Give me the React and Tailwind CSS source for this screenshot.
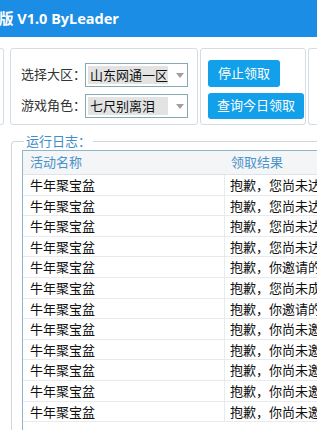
export default function App() {
  const rows = [
    "抱歉，您尚未达到领取条件",
    "抱歉，您尚未达到领取条件",
    "抱歉，您尚未达到领取条件",
    "抱歉，您尚未达到领取条件",
    "抱歉，你邀请的好友未达标",
    "抱歉，您尚未成功邀请好友",
    "抱歉，你邀请的好友未达标",
    "抱歉，你尚未邀请好友",
    "抱歉，你尚未邀请好友",
    "抱歉，你尚未邀请好友",
    "抱歉，你尚未邀请好友",
    "抱歉，你尚未邀请好友",
  ];

  return (
    <div
      className="w-[317px] h-[430px] overflow-hidden bg-white relative"
      style={{ fontFamily: '"Noto Sans", "Noto Sans CJK SC", sans-serif' }}
    >
      {/* title bar */}
      <div className="h-[37px] bg-[#1b8de4] flex items-center text-white font-bold text-[14.5px] whitespace-nowrap">
        <span className="-ml-[1px]">版 V1.0 ByLeader</span>
      </div>

      {/* top panels */}
      <div className="flex mt-[11px] h-[77px]">
        <div className="w-[4px] shrink-0 border border-l-0 border-[#d5dde2] rounded-r-[3px]" />
        <div className="ml-[6px] w-[188px] shrink-0 border border-[#d5dde2] rounded-[3px] pl-[10px] pt-[14px] flex flex-col gap-[7px]">
          <div className="flex items-center whitespace-nowrap">
            <span className="w-[64px] shrink-0 text-[13px] text-[#333]">选择大区：</span>
            <div className="w-[103px] h-[24px] shrink-0 border border-[#86a9b6] flex items-center pl-[2px]">
              <div className="w-[80px] h-[18px] bg-[#e3e3e3] text-[13px] text-[#111] leading-[18px] pl-[2px]">山东网通一区</div>
              <svg className="ml-[8px]" width="8" height="5" viewBox="0 0 8 5">
                <path d="M0 0 L8 0 L4 5 Z" fill="#a0a0a0" />
              </svg>
            </div>
          </div>
          <div className="flex items-center whitespace-nowrap">
            <span className="w-[64px] shrink-0 text-[13px] text-[#333]">游戏角色：</span>
            <div className="w-[103px] h-[24px] shrink-0 border border-[#86a9b6] flex items-center pl-[2px]">
              <div className="w-[80px] h-[18px] bg-[#e3e3e3] text-[13px] text-[#111] leading-[18px] pl-[2px]">七尺别离泪</div>
              <svg className="ml-[8px]" width="8" height="5" viewBox="0 0 8 5">
                <path d="M0 0 L8 0 L4 5 Z" fill="#a0a0a0" />
              </svg>
            </div>
          </div>
        </div>
        <div className="ml-[2px] w-[106px] shrink-0 border border-[#d5dde2] rounded-[3px] pl-[7px] pt-[11px] flex flex-col gap-[6px] items-start whitespace-nowrap">
          <button className="h-[27px] w-[72px] bg-[#12a0ea] text-white text-[13px] rounded-[3px]">停止领取</button>
          <button className="h-[26px] w-[96px] bg-[#12a0ea] text-white text-[13px] rounded-[3px]">查询今日领取</button>
        </div>
        <div className="ml-[2px] w-[20px] shrink-0 border border-r-0 border-[#d5dde2] rounded-l-[3px]" />
      </div>

      {/* log group */}
      <div className="relative mt-[16px] ml-[11px] h-[300px] border-l border-t border-[#cfd8de] rounded-tl-[4px]">
        <span className="absolute -top-[10px] left-[12px] bg-white px-[2px] text-[13px] leading-[18px] text-[#3f8fc6] whitespace-nowrap">运行日志：</span>
        <div className="ml-[10px] mt-[8px] border-l border-t border-[#8db6cc] h-[290px] whitespace-nowrap overflow-hidden">
          <div className="h-[24px] bg-[#f3f5f7] border-b border-[#dde3e8] flex items-center text-[13px] text-[#4a93c9]">
            <div className="w-[202px] shrink-0 pl-[7px]">活动名称</div>
            <div className="pl-[6px] shrink-0">领取结果</div>
          </div>
          {rows.map((r, i) => (
            <div key={i} className="h-[20.6px] border-b border-[#e8eaec] flex text-[13px] text-[#111] leading-[20px]">
              <div className="w-[202px] shrink-0 pl-[7px] border-r border-[#e8eaec]">牛年聚宝盆</div>
              <div className="pl-[5px] shrink-0">{r}</div>
            </div>
          ))}
        </div>
      </div>
    </div>
  );
}
